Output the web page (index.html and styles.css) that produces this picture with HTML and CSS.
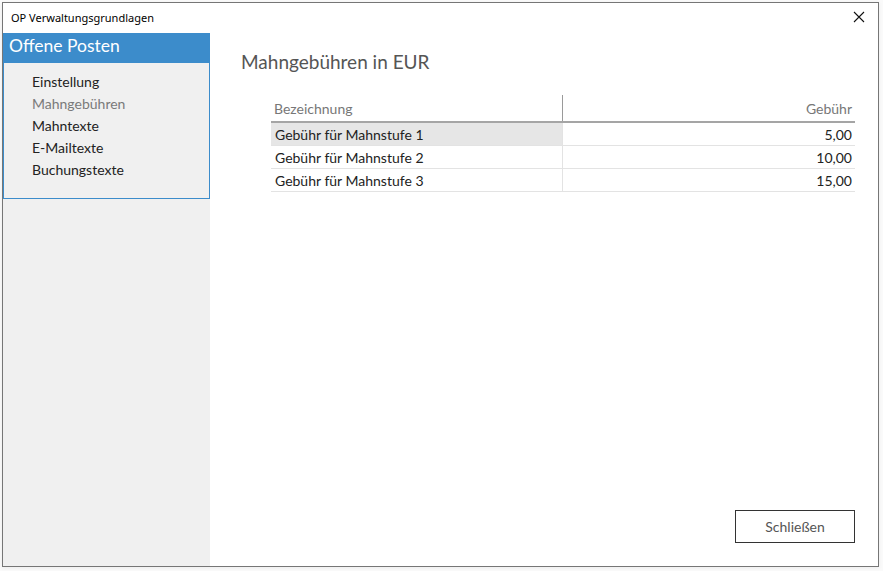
FILE: index.html
```html
<!DOCTYPE html>
<html lang="de">
<head>
<meta charset="utf-8">
<link rel="stylesheet" href="styles.css">
</head>
<body>
<div class="window">
  <div class="titlebar">
    <span class="title">OP Verwaltungsgrundlagen</span>
    <svg class="close" width="12" height="12" viewBox="0 0 12 12"><path d="M1 1 L11 11 M11 1 L1 11" stroke="#111" stroke-width="1.1" fill="none"/></svg>
  </div>
  <div class="main">
    <aside class="sidebar">
      <div class="side-head">Offene Posten</div>
      <ul class="menu">
        <li>Einstellung</li>
        <li class="active">Mahngebühren</li>
        <li>Mahntexte</li>
        <li>E-Mailtexte</li>
        <li>Buchungstexte</li>
      </ul>
    </aside>
    <section class="content">
      <h1 class="heading">Mahngebühren in EUR</h1>
      <table class="grid">
        <thead>
          <tr><th class="c-name">Bezeichnung</th><th class="c-fee">Gebühr</th></tr>
        </thead>
        <tbody>
          <tr class="sel"><td class="c-name">Gebühr für Mahnstufe 1</td><td class="c-fee">5,00</td></tr>
          <tr><td class="c-name">Gebühr für Mahnstufe 2</td><td class="c-fee">10,00</td></tr>
          <tr><td class="c-name">Gebühr für Mahnstufe 3</td><td class="c-fee">15,00</td></tr>
        </tbody>
      </table>
      <div class="footer">
        <button class="btn">Schließen</button>
      </div>
    </section>
  </div>
</div>
</body>
</html>
```
FILE: styles.css
```css
html, body { margin: 0; padding: 0; }
body {
  background: #fafafa;
  width: 883px;
  height: 571px;
  overflow: hidden;
  font-family: "Lato", "Open Sans", sans-serif;
}
.window {
  margin: 2px 0 0 2px;
  width: 877px;
  height: 565px;
  box-sizing: border-box;
  border: 1px solid #767676;
  background: #fff;
  display: flex;
  flex-direction: column;
  box-shadow: 0 1px 4px rgba(0,0,0,0.06);
}
.titlebar {
  height: 30px;
  display: flex;
  align-items: center;
  justify-content: space-between;
  padding: 0 13px 0 8px;
  flex: none;
}
.title {
  font-family: "Noto Sans", sans-serif;
  font-size: 11px;
  color: #000;
  margin-top: -2px;
}
.close { display: block; margin-top: -2px; }
.main {
  flex: 1;
  display: flex;
  min-height: 0;
}
.sidebar {
  width: 207px;
  flex: none;
  background: #f0f0f0;
}
.side-head {
  height: 30px;
  background: #3c8ccb;
  color: #fff;
  font-size: 17.5px;
  line-height: 25px;
  padding-left: 6px;
}
.menu {
  list-style: none;
  margin: 0;
  padding: 8px 0 15px 28px;
  height: 136px;
  box-sizing: border-box;
  border: 1px solid #3c8ccb;
  border-top: none;
  font-size: 14px;
  color: #222;
}
.menu li { height: 22px; line-height: 22px; }
.menu li.active { color: #7a7a7a; }
.content {
  flex: 1;
  display: flex;
  flex-direction: column;
  padding: 0 23px 23px 31px;
}
.heading {
  margin: 16px 0 0 0;
  font-size: 19px;
  font-weight: normal;
  color: #555;
  line-height: 26px;
}
.grid {
  margin: 20px 0 0 30px;
  border-collapse: collapse;
  font-size: 14px;
  width: 584px;
}
.grid th {
  font-weight: normal;
  color: #777;
  height: 26px;
  padding: 0 3px;
  border-bottom: 2px solid #a5a5a5;
  vertical-align: middle;
}
.grid th.c-name { text-align: left; width: 285px; border-right: 1px solid #9a9a9a; }
.grid th.c-fee { text-align: right; }
.grid td {
  height: 22px;
  padding: 0 3px 0 4px;
  color: #222;
  border-bottom: 1px solid #e3e3e3;
}
.grid td.c-name { border-right: 1px solid #e3e3e3; }
.grid td.c-fee { text-align: right; }
.grid tr.sel td.c-name { background: #e6e6e6; }
.footer {
  margin-top: auto;
  display: flex;
  justify-content: flex-end;
}
.btn {
  width: 120px;
  height: 33px;
  background: #fff;
  border: 1px solid #333;
  font-family: inherit;
  font-size: 14px;
  color: #555;
  padding: 0;
}
```
